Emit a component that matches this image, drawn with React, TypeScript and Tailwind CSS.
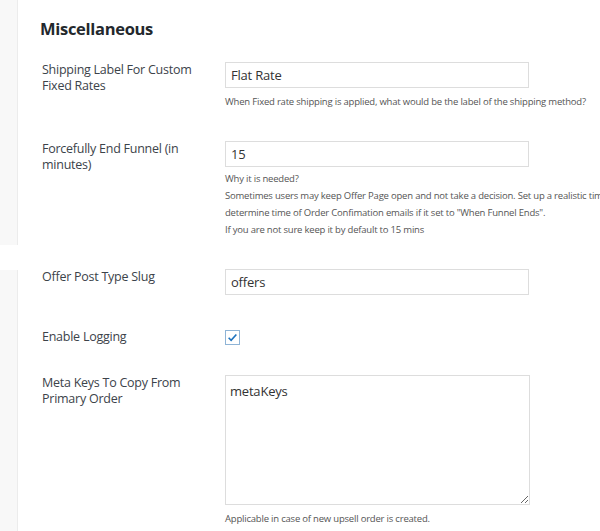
import React from 'react'

const font = { fontFamily: '"Open Sans", "Noto Sans", sans-serif' }

function Field({ value }: { value: string }) {
    return (
        <input
            readOnly
            value={value}
            className="w-[304px] h-[26px] border border-[#dddddd] bg-white px-[5px] text-[13px] tracking-[-0.2px] text-[#333] outline-none"
        />
    )
}

function Help({ children, className = '' }: { children: React.ReactNode; className?: string }) {
    return <p className={`text-[9.5px] tracking-[-0.2px] leading-[17px] text-[#555] whitespace-nowrap ${className}`}>{children}</p>
}

function Row({ label, children, className = '' }: { label: React.ReactNode; children: React.ReactNode; className?: string }) {
    return (
        <div className={`grid grid-cols-[185px_1fr] ${className}`}>
            <div className="text-[12.5px] tracking-[-0.25px] leading-[16px] text-[#3c434a] pl-[2px]">{label}</div>
            <div>{children}</div>
        </div>
    )
}

export default function App() {
    return (
        <div className="w-[600px] h-[531px] bg-white overflow-hidden" style={font}>
            {/* top panel */}
            <div className="flex h-[245px]">
                <div className="w-[18px] shrink-0 bg-[#f8f8f8] border-r border-[#ececec]" />
                <div className="flex-1 pl-[22px]">
                    <h2 className="mt-[17px] text-[16.5px] tracking-[-0.3px] leading-[24px] font-bold text-[#23282d]">Miscellaneous</h2>

                    <Row label={<>Shipping Label For Custom<br />Fixed Rates</>} className="mt-[21px]">
                        <Field value="Flat Rate" />
                        <Help className="mt-[5px]">When Fixed rate shipping is applied, what would be the label of the shipping method?</Help>
                    </Row>

                    <Row label={<>Forcefully End Funnel (in<br />minutes)</>} className="mt-[31px]">
                        <Field value="15" />
                        <div className="mt-[3px]">
                            <Help className="text-[#222] font-medium">Why it is needed?</Help>
                            <Help>Sometimes users may keep Offer Page open and not take a decision. Set up a realistic time to</Help>
                            <Help>determine time of Order Confimation emails if it set to "When Funnel Ends".</Help>
                            <Help>If you are not sure keep it by default to 15 mins</Help>
                        </div>
                    </Row>
                </div>
            </div>

            {/* bottom panel */}
            <div className="flex h-[261px] mt-[25px]">
                <div className="w-[18px] shrink-0 bg-[#f8f8f8] border-r border-[#ececec]" />
                <div className="flex-1 pl-[22px]">
                    <Row label="Offer Post Type Slug" className="mt-[-1px] items-start">
                        <Field value="offers" />
                    </Row>

                    <Row label="Enable Logging" className="mt-[34px] items-center">
                        <span className="flex w-[15px] h-[15px] border border-[#8fb4d6] bg-white items-center justify-center">
                            <svg width="11" height="11" viewBox="0 0 20 20">
                                <path d="M3 10.5l4.5 4.5L17 4.5" fill="none" stroke="#1e73be" strokeWidth="3" />
                            </svg>
                        </span>
                    </Row>

                    <Row label={<>Meta Keys To Copy From<br />Primary Order</>} className="mt-[30px]">
                        <textarea
                            readOnly
                            defaultValue="metaKeys"
                            className="block w-[305px] h-[130px] border border-[#dddddd] bg-white px-[4px] py-[6px] text-[13px] tracking-[-0.2px] text-[#333] outline-none resize"
                        />
                        <Help className="mt-[5px]">Applicable in case of new upsell order is created.</Help>
                    </Row>
                </div>
            </div>
        </div>
    )
}
